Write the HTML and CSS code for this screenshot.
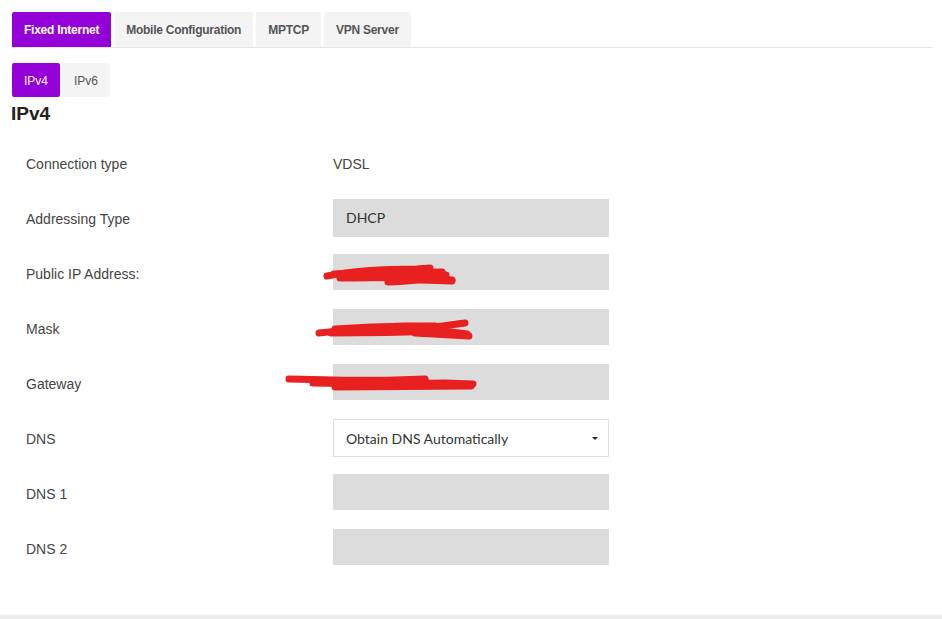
FILE: index.html
```html
<!DOCTYPE html>
<html lang="en">
<head>
  <meta charset="UTF-8" />
  <meta name="viewport" content="width=device-width, initial-scale=1.0"/>
  <title>Internet Settings</title>
  <link rel="stylesheet" href="styles.css">
</head>
<body>

  <div class="page">
    <!-- Main tabs -->
    <nav class="tabs">
      <a class="tab active">Fixed Internet</a>
      <a class="tab">Mobile Configuration</a>
      <a class="tab">MPTCP</a>
      <a class="tab">VPN Server</a>
    </nav>

    <!-- IP version tabs -->
    <nav class="subtabs">
      <a class="subtab active">IPv4</a>
      <a class="subtab">IPv6</a>
    </nav>

    <h2 class="title">IPv4</h2>

    <form class="form">
      <div class="row">
        <label>Connection type</label>
        <span class="value">VDSL</span>
      </div>

      <div class="row">
        <label>Addressing Type</label>
        <div class="field tall">DHCP</div>
      </div>

      <div class="row">
        <label>Public IP Address:</label>
        <div class="field"></div>
        <svg class="scribble" width="140" height="28" viewBox="0 0 140 28">
          <path d="M5 16 C30 11 60 9 95 9 L108 8" />
          <path d="M12 14 C40 13 70 12 104 12 L124 15" />
          <path d="M18 18 C50 18 80 17 110 18 L130 20" />
          <path d="M30 15 C60 15 90 14 118 16" />
          <path d="M66 22 C86 21 100 20 112 18" />
          <path d="M84 13 L120 12" />
          <path d="M100 20 L130 21" />
        </svg>
      </div>

      <div class="row">
        <label>Mask</label>
        <div class="field"></div>
        <svg class="scribble s2" width="162" height="26" viewBox="0 0 162 26">
          <path d="M4 18 C30 15 60 12 90 11 L120 11" />
          <path d="M20 14 C50 12 90 11 120 12 L150 8" />
          <path d="M16 18 C60 18 100 17 128 16 L152 19" />
          <path d="M30 15 C70 14 100 14 130 14" />
          <path d="M100 18 L154 21" />
        </svg>
      </div>

      <div class="row">
        <label>Gateway</label>
        <div class="field"></div>
        <svg class="scribble s3" width="194" height="24" viewBox="0 0 194 24">
          <path d="M4 7 C40 8 80 9 110 8 L140 7" />
          <path d="M28 11 C70 12 120 12 160 11 L188 12" />
          <path d="M50 15 C90 15 130 14 186 14" />
          <path d="M40 9 C80 9 110 9 140 8" />
          <path d="M60 12 C100 12 140 13 170 12" />
        </svg>
      </div>

      <div class="row">
        <label>DNS</label>
        <div class="select tall">
          <span>Obtain DNS Automatically</span>
          <span class="caret"></span>
        </div>
      </div>

      <div class="row">
        <label>DNS 1</label>
        <div class="field"></div>
      </div>

      <div class="row">
        <label>DNS 2</label>
        <div class="field"></div>
      </div>
    </form>
  </div>

  <footer class="bottom"></footer>

</body>
</html>
```

FILE: styles.css
```css
* {
  box-sizing: border-box;
  margin: 0;
  padding: 0;
}

body {
  font-family: "Liberation Sans", Arial, sans-serif;
  background: #fff;
  color: #444;
  height: 619px;
  overflow: hidden;
  position: relative;
}

.page {
  padding: 12px 10px 0 12px;
}

/* Tabs */
.tabs {
  display: flex;
  gap: 3px;
  border-bottom: 1px solid #e6e6e6;
}

.tab {
  display: block;
  height: 35px;
  line-height: 35px;
  padding: 1px 12px 0;
  font-size: 12px;
  font-weight: bold;
  letter-spacing: -0.25px;
  color: #555;
  background: #f4f4f4;
  border-radius: 2px 2px 0 0;
  cursor: pointer;
}

.tab.active {
  background: #9400d8;
  color: #fff;
}

.subtabs {
  display: flex;
  gap: 2px;
  margin-top: 15px;
}

.subtab {
  display: block;
  height: 34px;
  line-height: 34px;
  padding: 1px 12px 0;
  font-size: 12px;
  color: #555;
  background: #f4f4f4;
  border-radius: 2px;
  cursor: pointer;
}

.subtab.active {
  background: #9400d8;
  color: #fff;
}

.title {
  font-size: 19px;
  font-weight: bold;
  color: #222;
  line-height: 22px;
  margin-top: 6px;
  margin-left: -1px;
}

/* Form rows */
.form {
  padding-top: 19px;
  padding-left: 14px;
}

.row {
  position: relative;
  display: flex;
  align-items: flex-start;
  height: 38px;
  margin-bottom: 17px;
}

.row label {
  width: 307px;
  line-height: 38px;
  padding-top: 1px;
  font-size: 14px;
  color: #444;
}

.value {
  line-height: 38px;
  padding-top: 1px;
  font-size: 14px;
  color: #444;
}

.field {
  width: 276px;
  height: 36px;
  background: #dcdcdc;
  padding: 0 13px;
  font-family: Lato, "Liberation Sans", sans-serif;
  font-size: 14px;
  color: #333;
}

.field.tall {
  height: 38px;
  line-height: 38px;
}

.select {
  width: 276px;
  height: 38px;
  border: 1px solid #dedede;
  background: #fff;
  padding: 0 10px 0 12px;
  display: flex;
  align-items: center;
  justify-content: space-between;
  font-family: Lato, "Liberation Sans", sans-serif;
  font-size: 14px;
  color: #333;
}

.caret {
  width: 0;
  height: 0;
  border-left: 3px solid transparent;
  border-right: 3px solid transparent;
  border-top: 3px solid #222;
  margin-top: 1px;
}

/* Red marker strokes drawn over the address fields */
.scribble {
  position: absolute;
  left: 296px;
  top: 6px;
  fill: none;
  stroke: #e8201f;
  stroke-width: 7;
  stroke-linecap: round;
  stroke-linejoin: round;
}

.scribble.s2 {
  left: 289px;
  top: 6px;
}

.scribble.s3 {
  left: 259px;
  top: 8px;
}

.bottom {
  position: absolute;
  left: 0;
  right: 0;
  bottom: 0;
  height: 5px;
  background: #ececec;
  border-top: 1px solid #f6f6f6;
}
```
